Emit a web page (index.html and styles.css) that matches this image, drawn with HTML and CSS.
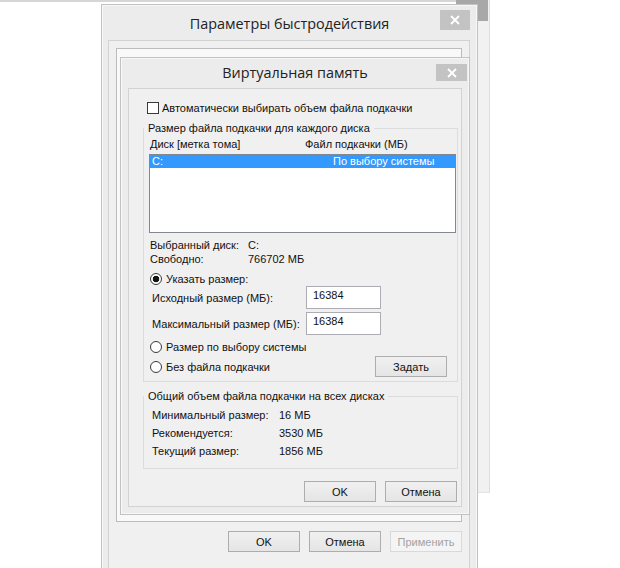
FILE: index.html
```html
<!DOCTYPE html>
<html lang="ru">
<head>
    <meta charset="UTF-8">
    <title>Виртуальная память</title>
    <link rel="stylesheet" href="styles.css">
</head>
<body>
    <div class="desktop">
        <div class="top-line"></div>
        <div class="back-window">
            <div class="back-close"></div>
        </div>

        <div class="window perf-window">
            <div class="titlebar">
                <span class="title">Параметры быстродействия</span>
                <span class="close-btn">
                    <svg width="10" height="10" viewBox="0 0 10 10"><path d="M1 1L9 9M9 1L1 9" stroke="#fff" stroke-width="1.8"/></svg>
                </span>
            </div>
            <div class="client perf-client">
                <div class="tab-page"></div>
                <div class="button-row">
                    <button class="btn">OK</button>
                    <button class="btn">Отмена</button>
                    <button class="btn" disabled>Применить</button>
                </div>
            </div>
        </div>

        <div class="window vm-window">
            <div class="titlebar">
                <span class="title">Виртуальная память</span>
                <span class="close-btn">
                    <svg width="10" height="10" viewBox="0 0 10 10"><path d="M1 1L9 9M9 1L1 9" stroke="#fff" stroke-width="1.8"/></svg>
                </span>
            </div>
            <div class="client vm-client">
                <div class="check-row">
                    <span class="checkbox"></span>
                    <span>Автоматически выбирать объем файла подкачки</span>
                </div>

                <fieldset class="group">
                    <legend>Размер файла подкачки для каждого диска</legend>
                    <div class="group-body">
                        <div class="list-header">
                            <span>Диск [метка тома]</span>
                            <span>Файл подкачки (МБ)</span>
                        </div>
                        <div class="listbox">
                            <div class="list-item selected">
                                <span>C:</span>
                                <span>По выбору системы</span>
                            </div>
                        </div>
                        <div class="info-grid">
                            <span>Выбранный диск:</span><span>C:</span>
                            <span>Свободно:</span><span>766702 МБ</span>
                        </div>
                        <div class="radio-row">
                            <span class="radio checked"></span>
                            <span>Указать размер:</span>
                        </div>
                        <div class="size-row">
                            <span>Исходный размер (МБ):</span>
                            <span class="textbox">16384</span>
                        </div>
                        <div class="size-row second">
                            <span>Максимальный размер (МБ):</span>
                            <span class="textbox">16384</span>
                        </div>
                        <div class="radio-row system-size">
                            <span class="radio"></span>
                            <span>Размер по выбору системы</span>
                        </div>
                        <div class="last-row">
                            <div class="radio-row">
                                <span class="radio"></span>
                                <span>Без файла подкачки</span>
                            </div>
                            <button class="btn set-btn">Задать</button>
                        </div>
                    </div>
                </fieldset>

                <fieldset class="group totals">
                    <legend>Общий объем файла подкачки на всех дисках</legend>
                    <div class="group-body totals-body">
                        <span>Минимальный размер:</span><span>16 МБ</span>
                        <span>Рекомендуется:</span><span>3530 МБ</span>
                        <span>Текущий размер:</span><span>1856 МБ</span>
                    </div>
                </fieldset>

                <div class="dialog-buttons">
                    <button class="btn">OK</button>
                    <button class="btn">Отмена</button>
                </div>
            </div>
        </div>
    </div>
</body>
</html>
```

FILE: styles.css
```css
body {
    margin: 0;
    width: 620px;
    height: 568px;
    overflow: hidden;
    background: #ffffff;
    font-family: "Liberation Sans", Arial, sans-serif;
    font-size: 11px;
    color: #111111;
    white-space: nowrap;
}

.desktop {
    position: relative;
    width: 620px;
    height: 568px;
}

/* windows behind the dialogs */
.top-line {
    position: absolute;
    left: 0;
    top: 0;
    width: 490px;
    height: 2px;
    background: #d6d6d6;
}

.back-window {
    position: absolute;
    left: 470px;
    top: 0;
    width: 19px;
    height: 492px;
    background: #f1f1f1;
    border-right: 1px solid #dedede;
    border-bottom: 1px solid #e4e4e4;
}

.back-close {
    position: absolute;
    left: -14px;
    top: 0;
    width: 32px;
    height: 21px;
    background: #a8a8a8;
}

.window {
    position: absolute;
    box-sizing: border-box;
    display: flex;
    flex-direction: column;
    background: #ececec;
    border: 1px solid #c2c2c2;
    box-shadow: inset 0 0 0 1px #f7f7f7;
}

.perf-window {
    left: 101px;
    top: 4px;
    width: 377px;
    height: 580px;
}

.vm-window {
    left: 120px;
    top: 57px;
    width: 350px;
    height: 458px;
}

.titlebar {
    position: relative;
    text-align: center;
    font-family: "Open Sans", sans-serif;
    font-size: 14.4px;
    color: #222222;
}

.perf-window .titlebar {
    height: 35px;
    line-height: 38px;
}

.vm-window .titlebar {
    height: 30px;
    line-height: 29px;
}

.close-btn {
    position: absolute;
    display: flex;
    align-items: center;
    justify-content: center;
    background: #c3c3c3;
}

.perf-window .close-btn {
    right: 7px;
    top: 5px;
    width: 30px;
    height: 20px;
}

.vm-window .close-btn {
    right: 2px;
    top: 6px;
    width: 31px;
    height: 17px;
}

.client {
    flex: 1;
    background: #f0f0f0;
    border: 1px solid #d2d2d2;
}

.perf-client {
    margin: 0 7px 0 6px;
}

.vm-client {
    margin: 0 7px 7px 7px;
    padding: 12px 0 0 14px;
}

.tab-page {
    height: 474px;
    margin: 7px 7px 0 7px;
    box-sizing: border-box;
    background: #f9f9f9;
    border: 1px solid #bcbcbc;
}

.button-row {
    display: flex;
    justify-content: flex-end;
    gap: 9px;
    margin: 9px 7px 0 0;
}

.btn {
    width: 72px;
    height: 21px;
    padding: 0;
    font-family: inherit;
    font-size: 11px;
    color: #111111;
    border: 1px solid #adadad;
    background: linear-gradient(#f0f0f0, #e5e5e5);
}

.btn:disabled {
    color: #a3a3a3;
    border-color: #d9d9d9;
    background: #f4f4f4;
}

.check-row {
    display: flex;
    align-items: center;
    gap: 3px;
    height: 14px;
    margin-left: 4px;
}

.checkbox {
    width: 10px;
    height: 10px;
    border: 1px solid #3a3a3a;
    background: #ffffff;
}

.group {
    width: 315px;
    box-sizing: border-box;
    min-width: 0;
    margin: 5px 0 0 0;
    padding: 0;
    border: 1px solid #dcdcdc;
}

.group legend {
    padding: 0 4px;
    line-height: 16px;
}

.group-body {
    padding: 0 1px 4px 5px;
}

.list-header {
    display: grid;
    grid-template-columns: 155px auto;
    margin-left: 1px;
    line-height: 16px;
}

.listbox {
    width: 307px;
    height: 79px;
    margin-top: 2px;
    box-sizing: border-box;
    background: #ffffff;
    border: 1px solid #828790;
}

.list-item {
    display: grid;
    grid-template-columns: 181px auto;
    height: 13px;
    line-height: 13px;
    padding-left: 2px;
}

.list-item.selected {
    background: #3399ff;
    color: #ffffff;
}

.info-grid {
    display: grid;
    grid-template-columns: 98px auto;
    margin: 5px 0 0 1px;
    line-height: 14px;
}

.radio-row {
    display: flex;
    align-items: center;
    gap: 4px;
    height: 14px;
    margin: 6px 0 0 1px;
}

.radio-row.system-size {
    margin-top: 5px;
}

.radio {
    width: 10px;
    height: 10px;
    border: 1px solid #3a3a3a;
    border-radius: 50%;
    background: #ffffff;
}

.radio.checked {
    background: radial-gradient(circle, #141414 0 3px, #ffffff 3.6px);
}

.size-row {
    display: grid;
    grid-template-columns: 154px 75px;
    align-items: center;
    height: 23px;
    margin-left: 3px;
}

.size-row.second {
    margin-top: 3px;
}

.textbox {
    height: 23px;
    box-sizing: border-box;
    padding-left: 6px;
    line-height: 17px;
    background: #ffffff;
    border: 1px solid #abadb3;
}

.last-row {
    display: flex;
    justify-content: space-between;
    align-items: center;
    height: 21px;
    margin-top: 2px;
}

.last-row .radio-row {
    margin-top: 0;
}

.set-btn {
    margin-right: 9px;
}

.totals {
    margin-top: 6px;
}

.totals-body {
    display: grid;
    grid-template-columns: 127px auto;
    grid-auto-rows: 18px;
    align-items: center;
    padding: 2px 0 8px 8px;
}

.dialog-buttons {
    display: flex;
    justify-content: flex-end;
    gap: 9px;
    width: 314px;
    margin-top: 12px;
}
```
